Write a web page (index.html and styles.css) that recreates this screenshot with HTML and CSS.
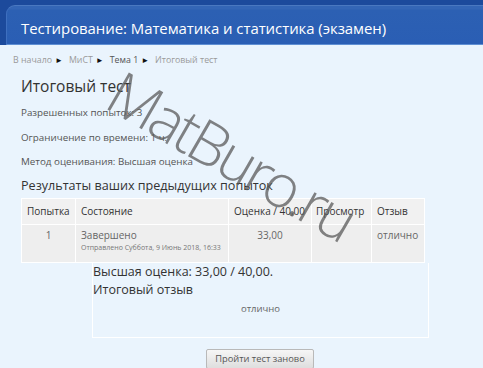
FILE: index.html
```html
<!DOCTYPE html>
<html lang="ru">
<head>
<meta charset="utf-8">
<title>Итоговый тест</title>
<link rel="stylesheet" href="styles.css">
</head>
<body>
<header class="top">
  <div class="panel">
    <h1 class="title">Тестирование: Математика и статистика (экзамен)</h1>
  </div>
</header>
<nav class="crumbs">
  <span class="c-link">В начало</span><span class="arr">►</span>
  <span class="c-link">МиСТ</span><span class="arr">►</span>
  <span class="c-dark">Тема 1</span><span class="arr">►</span>
  <span class="c-link">Итоговый тест</span>
</nav>
<main class="content">
  <h2 class="quiz-name">Итоговый тест</h2>
  <p class="info">Разрешенных попыток: 3</p>
  <p class="info">Ограничение по времени: 1 ч.</p>
  <p class="info">Метод оценивания: Высшая оценка</p>
  <h3 class="results">Результаты ваших предыдущих попыток</h3>
  <table class="attempts">
    <thead>
      <tr>
        <th class="c1">Попытка</th>
        <th class="c2">Состояние</th>
        <th class="c3">Оценка / 40,00</th>
        <th class="c4">Просмотр</th>
        <th class="c5">Отзыв</th>
      </tr>
    </thead>
    <tbody>
      <tr>
        <td class="c1 center">1</td>
        <td class="c2">Завершено<span class="sub">Отправлено Суббота, 9 Июнь 2018, 16:33</span></td>
        <td class="c3 center">33,00</td>
        <td class="c4"></td>
        <td class="c5">отлично</td>
      </tr>
    </tbody>
  </table>
  <section class="summary">
    <p class="best">Высшая оценка: 33,00 / 40,00.</p>
    <p class="fb-title">Итоговый отзыв</p>
    <p class="fb-text">отлично</p>
  </section>
  <div class="actions">
    <button class="btn" type="button">Пройти тест заново</button>
  </div>
</main>
<div class="watermark">MatBuro.ru</div>
</body>
</html>
```
FILE: styles.css
```css
html, body {
  margin: 0;
  padding: 0;
}
body {
  background: #eaf4fd;
  font-family: "Open Sans", "Noto Sans", sans-serif;
  color: #333;
  width: 483px;
  height: 368px;
  overflow: hidden;
  position: relative;
}
.top {
  background: #1c4a9c;
  padding: 5px 0 0 6px;
}
.panel {
  background: linear-gradient(#3466b6 0, #3466b6 3px, #2c60b3 4px, #2a5eb4 100%);
  border-radius: 9px 0 0 0;
  border-top: 1px solid #4a78c0;
  border-left: 1px solid #3e6fbf;
  border-bottom: 1px solid #5f8fd3;
  height: 38px;
  padding-left: 14px;
  display: flex;
  align-items: center;
}
.title {
  margin: 0;
  padding-top: 6px;
  font-weight: 400;
  font-size: 14.95px;
  color: #fff;
  letter-spacing: -0.05px;
}
.crumbs {
  padding: 7px 0 0 13px;
  height: 16px;
  font-size: 8.8px;
  line-height: 16px;
  display: flex;
  align-items: center;
}
.c-link { color: #9a9a9a; }
.c-dark { color: #555; }
.arr {
  color: #111;
  font-size: 8px;
  margin: 0 6px 0 3px;
}
.content {
  padding-left: 21px;
}
.quiz-name {
  margin: 0;
  padding-top: 7px;
  font-size: 15.5px;
  font-weight: 400;
  line-height: 22px;
  color: #333;
}
.info {
  margin: 0;
  font-size: 9.8px;
  line-height: 24.5px;
  color: #555;
}
.info:first-of-type { margin-top: 4px; }
.results {
  margin: 0;
  font-size: 12.6px;
  font-weight: 400;
  line-height: 18px;
  color: #333;
  padding-top: 2px;
}
.attempts {
  margin-top: 3px;
  border-collapse: collapse;
  table-layout: fixed;
  width: 404px;
  font-size: 10px;
}
.attempts th, .attempts td {
  border: 1px solid #fff;
  text-align: left;
  padding: 0 5px;
  font-weight: 400;
  white-space: nowrap;
}
.attempts th {
  background: #f1f1f1;
  color: #333;
  height: 25px;
}
.attempts th.c4 { padding-left: 4px; }
.attempts td {
  background: #eeeeee;
  color: #666;
  height: 34px;
  vertical-align: top;
  padding-top: 3px;
  line-height: 15px;
}
.attempts .center { text-align: center; }
.c1 { width: 43px; }
.c2 { width: 142px; }
.c3 { width: 72px; }
.c4 { width: 50px; }
.sub {
  display: block;
  font-size: 7px;
  line-height: 9px;
  color: #777;
  white-space: nowrap;
}
.summary {
  margin-left: 71px;
  width: 337px;
  height: 75px;
  border: 1px solid #fff;
  border-top: none;
  box-sizing: border-box;
}
.best {
  margin: 0;
  font-size: 12.5px;
  line-height: 17px;
  color: #333;
  padding-top: 0;
  margin-left: 0;
}
.fb-title {
  margin: 0;
  font-size: 12.5px;
  line-height: 20px;
  color: #333;
  padding-top: 0;
}
.fb-text {
  margin: 0;
  font-size: 9.5px;
  line-height: 16px;
  color: #666;
  text-align: center;
  padding-top: 1px;
}
.actions {
  display: flex;
  justify-content: center;
  padding-top: 11px;
}
.btn {
  font-family: "Open Sans", "Noto Sans", sans-serif;
  font-size: 9.3px;
  color: #555;
  width: 108px;
  height: 20px;
  padding: 0;
  border: 1px solid #b9b9b9;
  border-radius: 2px;
  background: linear-gradient(#f6f6f6, #dedede);
  margin-left: 16px;
}
.watermark {
  position: absolute;
  left: 232px;
  top: 155px;
  transform: translate(-50%, -50%) rotate(30deg);
  font-family: "Open Sans", "DejaVu Sans", sans-serif;
  font-weight: 300;
  font-size: 60px;
  letter-spacing: -3.5px;
  line-height: 1;
  color: rgba(90, 90, 90, 0.75);
  white-space: nowrap;
  pointer-events: none;
}
```
